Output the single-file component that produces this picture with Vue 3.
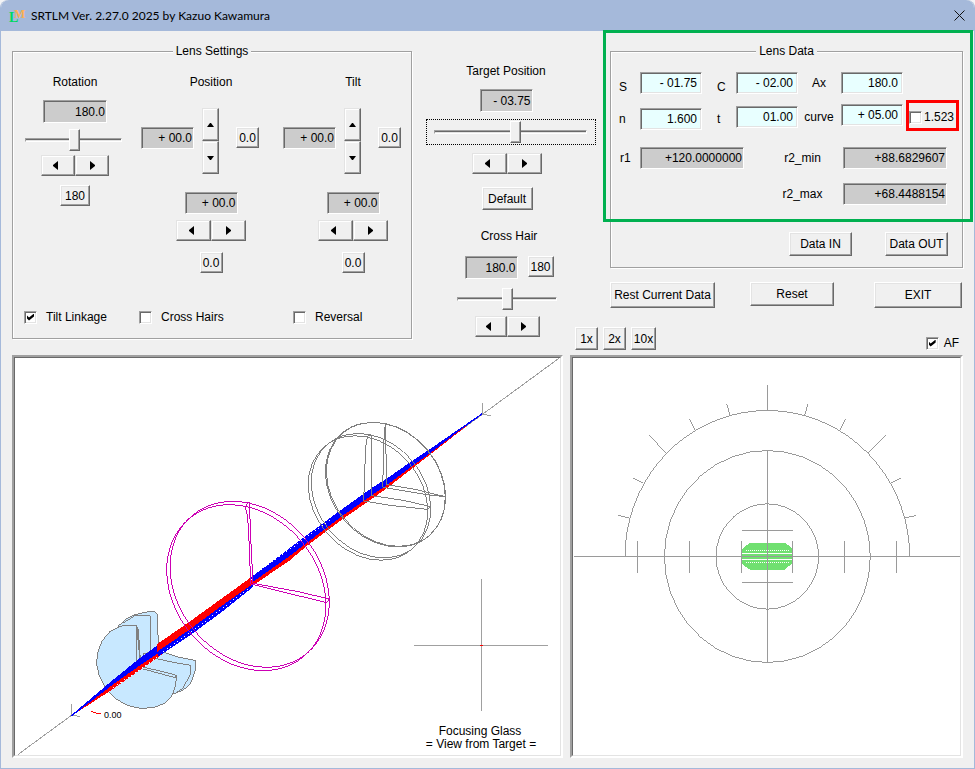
<script setup>
import { ref } from 'vue'

const rotation = ref('180.0')
const axes = ref([
  { name: 'Position', vertical: '+ 00.0', horizontal: '+ 00.0' },
  { name: 'Tilt', vertical: '+ 00.0', horizontal: '+ 00.0' }
])
const options = ref([
  { name: 'Tilt Linkage', on: true },
  { name: 'Cross Hairs', on: false },
  { name: 'Reversal', on: false }
])
const lensInputs = ref([
  { id: 'a', rows: [{ name: 'S', value: '- 01.75', low: true }, { name: 'n', value: '1.600' }] },
  { id: 'b', rows: [{ name: 'C', value: '- 02.00', low: true }, { name: 't', value: '01.00', mid: true }] },
  { id: 'c', rows: [{ name: 'Ax', value: '180.0' }, { name: 'curve', value: '+ 05.00', mid: true }] }
])
const target = ref('- 03.75')
const crossHair = ref('180.0')
const index1523 = ref(false)
const autoFocus = ref(true)

// Points of a faceted ellipse around the chart centre
function facets(rx, ry, from, to, step) {
  const pts = []
  for (let a = from; a <= to; a += step) {
    const t = (a * Math.PI) / 180
    pts.push(`${(592 + rx * Math.cos(t)).toFixed(1)},${(589.5 - ry * Math.sin(t)).toFixed(1)}`)
  }
  return pts.join(' ')
}
const innerRing = facets(154, 158, 0, 360, 10)
const outerRing = facets(309, 318, 0, 360, 10)
const protractor = facets(427, 438, 0, 180, 5)
const spokes = [
  [112, 424, 122, 457],
  [217, 378, 234, 412],
  [302, 309, 355, 363],
  [372, 220, 402, 235],
  [414, 115, 447, 123]
]
const scaleTicks = [202.5, 358.5, 514.5, 667.5, 823.5, 979.5]
</script>

<template>
  <div class="window">
    <header class="titlebar">
      <svg class="logo" viewBox="0 0 18 18" aria-hidden="true">
        <text x="1" y="15" class="logo-l">L</text>
        <text x="6" y="11" class="logo-m">M</text>
      </svg>
      <h1>SRTLM Ver. 2.27.0 2025 by Kazuo Kawamura</h1>
      <button class="close" type="button" aria-label="Close">
        <svg viewBox="0 0 11 11"><path d="M.5 .5 L10.5 10.5 M10.5 .5 L.5 10.5" /></svg>
      </button>
    </header>

    <main>
      <fieldset class="group settings">
        <legend>Lens Settings</legend>
        <div class="columns">
          <section class="rotation">
            <label class="heading" for="rotation">Rotation</label>
            <input id="rotation" v-model="rotation" class="field w64 h23" readonly />
            <input class="slider" type="range" min="0" max="100" value="51" aria-label="Rotation" />
            <div class="pair">
              <button type="button" class="arrow prev" aria-label="Decrease"><svg viewBox="0 0 5 9"><path d="M5 0V9L0 5V4Z" /></svg></button>
              <button type="button" class="arrow" aria-label="Increase"><svg viewBox="0 0 5 9"><path d="M0 0V9L5 5V4Z" /></svg></button>
            </div>
            <button type="button" class="btn w30 h21">180</button>
          </section>

          <section v-for="axis in axes" :key="axis.name" class="axis">
            <label class="heading" :for="axis.name">{{ axis.name }}</label>
            <div class="cluster">
              <input :id="axis.name" v-model="axis.vertical" class="field w53" readonly />
              <div class="spinner">
                <button type="button" class="arrow" aria-label="Up"><svg class="v" viewBox="0 0 7 4"><path d="M3 0H4L7 4H0Z" /></svg></button>
                <button type="button" class="arrow" aria-label="Down"><svg class="v" viewBox="0 0 7 4"><path d="M3 4H4L7 0H0Z" /></svg></button>
              </div>
              <button type="button" class="btn w23 h21 zero">0.0</button>
            </div>
            <div class="lower">
              <input v-model="axis.horizontal" class="field w53" readonly :aria-label="axis.name + ' horizontal'" />
              <div class="pair w70">
                <button type="button" class="arrow prev" aria-label="Left"><svg viewBox="0 0 5 9"><path d="M5 0V9L0 5V4Z" /></svg></button>
                <button type="button" class="arrow" aria-label="Right"><svg viewBox="0 0 5 9"><path d="M0 0V9L5 5V4Z" /></svg></button>
              </div>
              <button type="button" class="btn w23 h21">0.0</button>
            </div>
          </section>
        </div>
        <div class="options">
          <label v-for="o in options" :key="o.name" class="check"><input v-model="o.on" type="checkbox" />{{ o.name }}</label>
        </div>
      </fieldset>

      <section class="middle">
        <div class="target">
          <label class="heading" for="target">Target Position</label>
          <input id="target" v-model="target" class="field w53 h23" readonly />
        </div>
        <div class="focus">
          <input class="slider" type="range" min="0" max="1000" value="535" aria-label="Target position" />
        </div>
        <div class="target-actions">
          <div class="pair w70">
            <button type="button" class="arrow prev" aria-label="Decrease"><svg viewBox="0 0 5 9"><path d="M5 0V9L0 5V4Z" /></svg></button>
            <button type="button" class="arrow" aria-label="Increase"><svg viewBox="0 0 5 9"><path d="M0 0V9L5 5V4Z" /></svg></button>
          </div>
          <button type="button" class="btn w51 h23">Default</button>
        </div>
        <div class="hair">
          <label class="heading" for="hair">Cross Hair</label>
          <div class="hair-row">
            <input id="hair" v-model="crossHair" class="field w53 h23" readonly />
            <button type="button" class="btn w26 h21">180</button>
          </div>
        </div>
        <div class="hair-move">
          <input class="slider w100" type="range" min="0" max="1000" value="506" aria-label="Cross hair" />
          <div class="pair w65">
            <button type="button" class="arrow prev" aria-label="Decrease"><svg viewBox="0 0 5 9"><path d="M5 0V9L0 5V4Z" /></svg></button>
            <button type="button" class="arrow" aria-label="Increase"><svg viewBox="0 0 5 9"><path d="M0 0V9L5 5V4Z" /></svg></button>
          </div>
        </div>
      </section>

      <section class="right">
        <fieldset class="group data">
          <legend>Lens Data</legend>
          <div class="inputs">
            <div v-for="col in lensInputs" :key="col.id" class="col" :class="col.id">
              <div v-for="row in col.rows" :key="row.name" class="row">
                <label :for="'lens-' + row.name" :class="{ low: row.low, mid: row.mid }">{{ row.name }}</label>
                <input :id="'lens-' + row.name" v-model="row.value" class="field edit w62" />
              </div>
            </div>
            <label class="check marked"><input v-model="index1523" type="checkbox" />1.523</label>
          </div>
          <div class="results">
            <label for="r1">r1</label>
            <input id="r1" class="field" readonly value="+120.0000000" />
            <label class="r2" for="r2min">r2_min</label>
            <input id="r2min" class="field" readonly value="+88.6829607" />
            <label class="r2 second" for="r2max">r2_max</label>
            <input id="r2max" class="field" readonly value="+68.4488154" />
          </div>
          <div class="io">
            <button type="button" class="btn w63 h24">Data IN</button>
            <button type="button" class="btn w63 h24">Data OUT</button>
          </div>
        </fieldset>
        <div class="actions">
          <button type="button" class="btn w105 h26">Rest Current Data</button>
          <button type="button" class="btn w84 h24">Reset</button>
          <button type="button" class="btn w88 h26">EXIT</button>
        </div>
        <div class="outline"></div>
      </section>

      <div class="zoombar">
        <button type="button" class="btn w23 h23">1x</button>
        <button type="button" class="btn w23 h23">2x</button>
        <button type="button" class="btn w25 h23">10x</button>
        <label class="check af"><input v-model="autoFocus" type="checkbox" />AF</label>
      </div>

      <div class="canvas scene">
        <svg viewBox="15 358 545 397" shape-rendering="crispEdges" role="img" aria-label="Optical path">
          <path class="axis-line" d="M18 754.5 L560 357.5" />
          <path class="axis-line" d="M71.5 704V715L80 716.5 M482.5 403V414.5L491 415.5" />

          <g transform="translate(60 590) scale(.33333)">
            <g class="eye">
              <path d="M175 108 L200 86 L225 74 L265 65 L286 66 L291 72 L293 110 L296 185 L240 225Z" />
              <path class="open" d="M188 100 L225 77 L271 77 V185" />
              <path d="M250 190 L305 185 L350 200 L408 212 L405 245 L392 280 L370 300 L340 312 L250 260Z" />
              <path class="open" d="M285 205 L340 217 L393 226 L390 255 L368 296 L348 308" />
              <path d="M230 108 L185 108 L150 124 L126 153 L112 190 L110 222 L118 258 L138 295 L168 327 L202 346 L240 355 L280 353 L312 341 L335 318 L346 290 L350 256 L300 243 L242 230Z" />
              <path class="open" d="M230 108 L235 118 L242 225 M230 108V215 M250 237 L345 263 L350 256" />
            </g>
            <path class="red" d="M34 378 L150 288 L240 224 L297 184 L305 194 L240 240 L150 303Z" />
            <path class="blue" d="M33 376 L150 277 L240 204 L295 164 L297 188 L240 226 L150 290Z" />
            <path class="blue-line" d="M33 378 L150 288" />
            <path class="hatch" d="M160 293 L290 203" />
          </g>

          <g transform="translate(150 480) scale(.33333)">
            <path class="blue" d="M24 530 L120 466 L210 400 L310 320 L302 306 L210 378 L120 446 L24 510Z" />
            <path class="hatch" d="M40 516 L120 458 L210 391 L300 322" />
            <path class="red" d="M22 492 L120 424 L210 359 L302 293 L310 311 L210 381 L120 448 L22 515Z" />
            <path class="red" d="M304 304 L420 222 L420 241 L312 314Z" />
            <path class="blue" d="M302 292 L420 204 L420 228 L308 306Z" />
            <path class="hatch" d="M312 284 L415 210" />
          </g>

          <g transform="translate(290 400) scale(.33333)">
            <path class="red" d="M-2 462 L50 426 L150 348 L245 280 L290 252 L370 192 L420 157 L577 41 L420 164 L370 203 L290 265 L245 297 L150 363 L50 438 L-2 482Z" />
            <path class="blue" d="M-2 445 L50 406 L150 332 L245 264 L290 236 L370 180 L420 147 L577 39 L420 160 L370 196 L290 256 L245 286 L150 353 L50 429 L-2 469Z" />
            <path class="blue-line" d="M400 166 L577 41" />
            <path class="hatch" d="M0 447 L120 360" />
            <g class="glass">
              <ellipse cx="286" cy="254" rx="202" ry="163" transform="rotate(50.2 286 254)" />
              <ellipse cx="288" cy="253" rx="201" ry="162" transform="rotate(50.2 288 253)" />
              <ellipse cx="243" cy="287" rx="202" ry="162" transform="rotate(50.2 243 287)" />
              <ellipse cx="234" cy="294" rx="202" ry="162" transform="rotate(50.2 234 294)" />
              <path d="M286 68 L290 254 L370 267 L466 290 L410 284 L278 262 L282 120 L286 68" />
              <path d="M233 108 L227 140 L221 303 L300 316 L412 328 L422 320 L340 301 L245 287 V105 L233 108" />
            </g>
          </g>

          <g class="lens" transform="translate(150 480) scale(.33333)">
            <ellipse cx="299" cy="313" rx="269" ry="216" transform="rotate(50.5 299 313)" />
            <ellipse cx="289" cy="323" rx="269" ry="216" transform="rotate(50.5 289 323)" />
            <path d="M298 66 L303 190 L309 310 L440 334 L538 357 L530 368 L440 346 L302 312 L298 200 L293 110 L285 80Z" />
          </g>

          <path class="red-line" d="M91 711.5 L96 713 L101 713.5" />
          <text x="104" y="718" class="small">0.00</text>

          <path class="axis-line" d="M481.5 579V711 M414 645.5H548" />
          <path class="red-line" d="M480 645.5H483" />
          <text x="480" y="735" class="caption">Focusing Glass</text>
          <text x="481" y="748" class="caption">= View from Target =</text>
        </svg>
      </div>

      <div class="canvas chart">
        <svg viewBox="573 358 387 397" shape-rendering="crispEdges" role="img" aria-label="Refraction chart">
          <g transform="translate(570 360) scale(.33333)">
            <path class="spot" d="M542 548H643L653 554L664 562L667 568V612L658 617L643 630H542L532 624L519 615L515 610V568L526 558Z" />
            <path class="gap" d="M515 580.5H667 M515 598.5H667" />
            <path class="gap dots" d="M527 571.5H656 M527 607.5H656" />
            <g class="grid">
              <polyline :points="innerRing" />
              <polyline :points="outerRing" />
              <polyline :points="protractor" />
              <path d="M12 589.5H1170 M592.5 75V151 M592.5 271V908 M516 511.5H669 M516 667.5H669" />
              <path v-for="x in scaleTicks" :key="x" :d="`M${x} 543V638`" />
              <template v-for="s in spokes" :key="s[0]">
                <line :x1="592 - s[0]" :y1="589 - s[1]" :x2="592 - s[2]" :y2="589 - s[3]" />
                <line :x1="592 + s[0]" :y1="589 - s[1]" :x2="592 + s[2]" :y2="589 - s[3]" />
              </template>
            </g>
          </g>
        </svg>
      </div>
    </main>
  </div>
</template>

<style>
body {
  margin: 0;
  background: #f3f4f6;
}
</style>

<style scoped>
* {
  box-sizing: border-box;
}
.window {
  display: flex;
  flex-direction: column;
  min-height: 100vh;
  border: 1px solid #a5b9da;
  border-top: 0;
  border-radius: 8px 8px 0 0;
  background: #f0f0f0;
  color: #000;
  font: 12px/14px "Liberation Sans", Arial, sans-serif;
}
.titlebar {
  display: flex;
  align-items: center;
  height: 31px;
  padding: 0 9px 0 7px;
  border-radius: 8px 8px 0 0;
  background: #a5b9da;
}
.logo {
  width: 18px;
  height: 18px;
  overflow: visible;
}
.logo text {
  font-family: "Liberation Serif", serif;
  font-weight: bold;
}
.logo-l {
  fill: #00d860;
  font-size: 14px;
}
.logo-m {
  fill: #ffb050;
  font-size: 12px;
}
h1 {
  flex: 1;
  margin: 0 0 0 5px;
  font: 12px/16px Lato, "Noto Sans", sans-serif;
}
.close {
  display: flex;
  padding: 0;
  border: 0;
  background: none;
}
.close svg {
  width: 11px;
  height: 11px;
  stroke: #111;
  fill: none;
}

main {
  display: grid;
  grid-template-columns: 400fr 14px 144fr 26px 14px 353fr;
  padding: 13px 11px 10px;
}
.settings {
  grid-area: 1 / 1 / 3 / 2;
  align-self: start;
}
.middle {
  grid-area: 1 / 3 / 3 / 5;
}
.right {
  position: relative;
  grid-area: 1 / 6 / 2 / 7;
}
.zoombar {
  grid-area: 2 / 4 / 3 / 7;
}
.scene {
  grid-area: 3 / 1 / 4 / 4;
  margin-right: 7px;
}
.chart {
  grid-area: 3 / 4 / 4 / 7;
}

.group {
  min-width: 0;
  margin: 0;
  padding: 0;
  border: 1px solid #a0a0a0;
  box-shadow: 1px 1px 0 #fff, inset 1px 1px 0 #fff;
}
legend {
  margin: 0 auto;
  padding: 0 3px;
  background: #f0f0f0;
}
.heading {
  line-height: 14px;
}

.field {
  display: block;
  height: 22px;
  margin: 0;
  padding: 0 1px 0 2px;
  border: 1px solid;
  border-color: #a0a0a0 #fff #fff #a0a0a0;
  border-radius: 0;
  background: #ccc;
  box-shadow: inset 1px 1px 0 #696969;
  color: #000;
  font: inherit;
  text-align: right;
  outline: none;
}
.edit {
  padding-right: 4px;
  background: #e8ffff;
  box-shadow: inset 1px 1px 0 #696969, inset -1px -1px 0 #e3e3e3;
}
.btn,
.arrow {
  display: flex;
  align-items: center;
  justify-content: center;
  flex: none;
  margin: 0;
  padding: 0;
  border: 1px solid;
  border-color: #fff #696969 #696969 #fff;
  border-radius: 0;
  background: #f0f0f0;
  box-shadow: inset -1px -1px 0 #a0a0a0, inset 1px 1px 0 #e3e3e3;
  color: #000;
  font: inherit;
  white-space: nowrap;
}
.arrow {
  flex: 1 1 50%;
  border-color: #e3e3e3 #696969 #696969 #e3e3e3;
  box-shadow: inset -1px -1px 0 #a0a0a0, inset 1px 1px 0 #fff;
}
.arrow svg {
  width: 5px;
  height: 9px;
}
.arrow svg.v {
  width: 7px;
  height: 4px;
}
.arrow.prev {
  padding-right: 5px;
}
.pair {
  display: flex;
  width: 68px;
  height: 21px;
}
.w23 { width: 23px; }
.w25 { width: 25px; }
.w26 { width: 26px; }
.w30 { width: 30px; }
.w51 { width: 51px; }
.w53 { width: 53px; }
.w62 { width: 62px; }
.w63 { width: 63px; }
.w64 { width: 64px; }
.w65 { width: 65px; }
.w70 { width: 70px; }
.w84 { width: 84px; }
.w88 { width: 88px; }
.w100 { width: 100px; }
.w105 { width: 105px; }
.h21 { height: 21px; }
.h23 { height: 23px; }
.h24 { height: 24px; }
.h26 { height: 26px; }

.slider {
  display: block;
  height: 26px;
  margin: 0;
  appearance: none;
  background: none;
  outline: none;
}
.slider::-webkit-slider-runnable-track {
  height: 4px;
  border: 1px solid;
  border-color: #a0a0a0 #fff #fff #a0a0a0;
  background: linear-gradient(#696969 50%, #e3e3e3 50%);
}
.slider::-webkit-slider-thumb {
  width: 11px;
  height: 22px;
  margin-top: -10px;
  appearance: none;
  border: 1px solid;
  border-color: #fff #696969 #696969 #fff;
  border-radius: 0;
  background: #f0f0f0;
  box-shadow: inset -1px -1px 0 #a0a0a0;
}

.check {
  display: flex;
  align-items: center;
  gap: 9px;
}
.check input {
  position: relative;
  flex: none;
  width: 13px;
  height: 13px;
  margin: 0;
  appearance: none;
  border: 1px solid;
  border-color: #a0a0a0 #fff #fff #a0a0a0;
  background: #fff;
  box-shadow: inset 1px 1px 0 #696969, inset -1px -1px 0 #e3e3e3;
}
.check input:checked::before {
  content: "";
  position: absolute;
  left: 2px;
  top: 2px;
  width: 7px;
  height: 7px;
  background: #000;
  clip-path: polygon(0 2px, 2px 4px, 7px 0, 7px 3px, 2px 7px, 0 5px);
}

.columns {
  display: grid;
  grid-template-columns: 116fr 142fr 119fr;
  padding: 17px 9px 0 12px;
}
.rotation {
  display: flex;
  flex-direction: column;
  align-items: center;
  width: 100px;
}
.rotation .field {
  margin-top: 11px;
}
.rotation .slider {
  align-self: flex-start;
  width: 97px;
  margin-top: 4px;
}
.rotation .pair {
  margin-top: 2px;
}
.rotation .btn {
  margin-top: 9px;
}
.axis {
  display: flex;
  flex-direction: column;
  width: 118px;
}
.axis .heading {
  padding-left: 22px;
  text-align: center;
}
.cluster {
  display: flex;
  align-items: flex-start;
  margin-top: 19px;
}
.cluster .field,
.cluster .btn {
  margin-top: 19px;
}
.spinner {
  display: flex;
  flex-direction: column;
  width: 17px;
  height: 66px;
  margin: 0 17px 0 8px;
}
.lower {
  display: flex;
  flex-direction: column;
  align-items: center;
  margin-top: 18px;
  padding-left: 22px;
}
.lower .pair {
  margin: 6px 0 11px;
}
.options {
  display: grid;
  grid-template-columns: 115fr 154fr 108fr;
  padding: 37px 10px 14px 11px;
}

.middle > div {
  display: flex;
  flex-direction: column;
  align-items: center;
}
.middle .target {
  gap: 11px;
  padding: 20px 10px 0 0;
}
.middle .focus {
  height: 26px;
  margin: 7px 0 8px;
  padding: 0 8px 0 7px;
  border: 1px dotted #000;
}
.focus .slider {
  width: 100%;
  height: 24px;
}
.middle .target-actions {
  gap: 13px;
  padding-right: 8px;
}
.middle .hair {
  gap: 13px;
  margin: 19px 0 7px;
  padding-right: 4px;
}
.hair-row {
  display: flex;
  gap: 10px;
}
.middle .hair-move {
  gap: 4px;
  padding-right: 8px;
}

.inputs {
  display: flex;
  padding-top: 14px;
}
.col {
  display: flex;
  flex-direction: column;
}
.row {
  display: flex;
  align-items: center;
}
.row label.low {
  padding-top: 8px;
}
.row label.mid {
  padding-top: 4px;
}
.a { gap: 14px; }
.b { gap: 12px; }
.c { gap: 10px; }
.a label {
  width: 29px;
  padding-left: 8px;
}
.b label {
  width: 34px;
  padding-left: 15px;
}
.c label {
  width: 43px;
  padding-right: 1px;
  text-align: center;
}
.marked {
  width: 53px;
  height: 31px;
  margin: 28px 0 -1px 3px;
  gap: 2px;
  padding-top: 3px;
  border: 3px solid #f00;
}
.results {
  display: grid;
  grid-template-columns: 29px 104px 99px 104px;
  align-items: center;
  gap: 14px 0;
  padding-top: 17px;
}
.results label {
  padding-left: 9px;
}
.results .field {
  width: 104px;
}
.results .r2 {
  padding-left: 18px;
  text-align: center;
}
.results .second {
  grid-column: 3;
}
.io {
  display: flex;
  justify-content: flex-end;
  gap: 33px;
  padding: 27px 14px 11px 0;
}
.actions {
  display: grid;
  grid-template-columns: 140fr 124fr 89fr;
  margin-top: 14px;
}
.outline {
  position: absolute;
  top: -14px;
  right: -10px;
  left: -7px;
  height: 192px;
  border: 3px solid #00b050;
  pointer-events: none;
}
.zoombar {
  display: flex;
  gap: 5px;
  padding: 19px 4px 5px 5px;
}
.af {
  align-self: flex-end;
  gap: 5px;
  margin-left: auto;
}

.canvas {
  border: 2px solid;
  border-color: #a0a0a0 #fff #fff #a0a0a0;
  background: #fff;
}
.canvas svg {
  display: block;
  width: 100%;
  height: auto;
  border: 1px solid;
  border-color: #696969 #e3e3e3 #e3e3e3 #696969;
}
.axis-line {
  fill: none;
  stroke: #a0a0a0;
}
.red-line {
  fill: none;
  stroke: #f00;
}
.eye path {
  fill: #c8e8ff;
  stroke: #808080;
  stroke-width: 3;
}
.eye .open {
  fill: none;
}
.red {
  fill: #f00;
}
.blue {
  fill: #00f;
}
.blue-line {
  fill: none;
  stroke: #00f;
  stroke-width: 4;
}
.hatch {
  fill: none;
  stroke: #fff;
  stroke-width: 3;
  stroke-dasharray: 4 9;
}
.lens {
  fill: none;
  stroke: #cc00b4;
  stroke-width: 3;
}
.glass {
  fill: none;
  stroke: #808080;
  stroke-width: 3;
}
.small {
  font-size: 9px;
}
.caption {
  font-size: 12px;
  text-anchor: middle;
}
.spot {
  fill: #70e070;
}
.gap {
  stroke: #fff;
  stroke-width: 3;
}
.dots {
  stroke-dasharray: 3 3;
}
.grid {
  fill: none;
  stroke: #9a9a9a;
  stroke-width: 3;
}
</style>
